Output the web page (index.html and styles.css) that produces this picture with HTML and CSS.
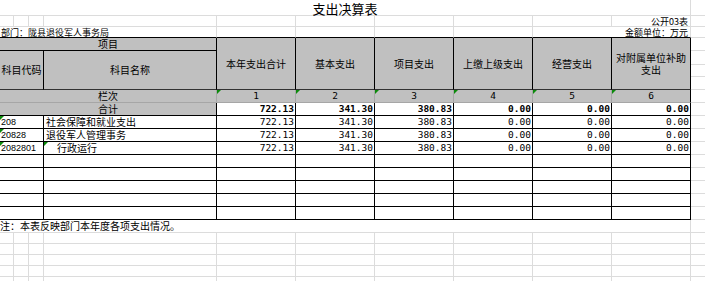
FILE: index.html
```html
<!DOCTYPE html>
<html lang="zh-CN">
<head>
<meta charset="utf-8">
<title>支出决算表</title>
<link rel="stylesheet" href="styles.css">
</head>
<body>
<div class="sheet">
  <!-- row: title -->
  <div class="s10 title">支出决算表</div><div></div>
  <!-- row: 公开03表 -->
  <div></div><div></div><div></div><div></div><div></div><div></div><div></div><div></div><div></div><div class="r small">公开03表</div><div></div>
  <!-- row: 部门 -->
  <div class="s4 tb small lbl">部门：陇县退役军人事务局</div><div class="tb"></div><div class="tb"></div><div class="tb"></div><div class="tb"></div><div class="s2 tb r small">金额单位：万元</div><div></div>
  <!-- header -->
  <div class="h s4">项目</div>
  <div class="h rs4 hb">本年支出合计</div>
  <div class="h rs4 hb">基本支出</div>
  <div class="h rs4 hb">项目支出</div>
  <div class="h rs4 hb">上缴上级支出</div>
  <div class="h rs4 hb">经营支出</div>
  <div class="h rs4 hb wrap">对附属单位补助支出</div>
  <div></div>
  <div class="h s3 rs3 hb">科目代码</div><div class="h rs3 hb">科目名称</div><div></div>
  <div></div>
  <div></div>
  <!-- 栏次 -->
  <div class="h2 s4">栏次</div>
  <div class="h2 n t">1</div><div class="h2 n t">2</div><div class="h2 n t">3</div><div class="h2 n t">4</div><div class="h2 n t">5</div><div class="h2 n t last">6</div>
  <div></div>
  <!-- 合计 -->
  <div class="h s4">合计</div>
  <div class="bk num b">722.13</div><div class="bk num b">341.30</div><div class="bk num b">380.83</div><div class="bk num b">0.00</div><div class="bk num b">0.00</div><div class="bk num b">0.00</div>
  <div></div>
  <!-- data -->
  <div class="bk s3 code t">208</div><div class="bk name">社会保障和就业支出</div>
  <div class="bk num">722.13</div><div class="bk num">341.30</div><div class="bk num">380.83</div><div class="bk num">0.00</div><div class="bk num">0.00</div><div class="bk num">0.00</div>
  <div></div>
  <div class="bk s3 code t">20828</div><div class="bk name">退役军人管理事务</div>
  <div class="bk num">722.13</div><div class="bk num">341.30</div><div class="bk num">380.83</div><div class="bk num">0.00</div><div class="bk num">0.00</div><div class="bk num">0.00</div>
  <div></div>
  <div class="bk s3 code t">2082801</div><div class="bk name ind t">行政运行</div>
  <div class="bk num">722.13</div><div class="bk num">341.30</div><div class="bk num">380.83</div><div class="bk num">0.00</div><div class="bk num">0.00</div><div class="bk num">0.00</div>
  <div></div>
  <!-- empty table rows -->
  <div class="bk s3"></div><div class="bk"></div><div class="bk"></div><div class="bk"></div><div class="bk"></div><div class="bk"></div><div class="bk"></div><div class="bk"></div><div></div>
  <div class="bk s3"></div><div class="bk"></div><div class="bk"></div><div class="bk"></div><div class="bk"></div><div class="bk"></div><div class="bk"></div><div class="bk"></div><div></div>
  <div class="bk s3"></div><div class="bk"></div><div class="bk"></div><div class="bk"></div><div class="bk"></div><div class="bk"></div><div class="bk"></div><div class="bk"></div><div></div>
  <div class="bk s3"></div><div class="bk"></div><div class="bk"></div><div class="bk"></div><div class="bk"></div><div class="bk"></div><div class="bk"></div><div class="bk"></div><div></div>
  <div class="bk s3"></div><div class="bk"></div><div class="bk"></div><div class="bk"></div><div class="bk"></div><div class="bk"></div><div class="bk"></div><div class="bk"></div><div></div>
  <!-- note -->
  <div class="s10 note">注：本表反映部门本年度各项支出情况。</div><div></div>
  <!-- empty sheet rows -->
  <div></div><div></div><div></div><div></div><div></div><div></div><div></div><div></div><div></div><div></div><div></div>
  <div></div><div></div><div></div><div></div><div></div><div></div><div></div><div></div><div></div><div></div>
  <div></div><div></div><div></div><div></div><div></div><div></div><div></div><div></div><div></div><div></div>
  <div></div><div></div><div></div><div></div><div></div><div></div><div></div><div></div><div></div><div></div>
  <div></div><div></div><div></div><div></div><div></div><div></div><div></div><div></div><div></div><div></div>
  <div></div><div></div><div></div><div></div><div></div><div></div><div></div><div></div><div></div><div></div>
</div>
</body>
</html>
```

FILE: styles.css
```css
html, body {
  margin: 0;
  padding: 0;
  background: #fff;
  overflow: hidden;
}

.sheet {
  display: grid;
  grid-template-columns: 14px 15px 15px 173px repeat(6, 79px) 15px;
  grid-template-rows: 16px 11px 11px 13px 14px 12px 13px 13px 13px repeat(8, 13px) 13px repeat(6, 11px);
  width: 706px;
  height: 281px;
  overflow: hidden;
  font-family: "Noto Sans CJK SC", sans-serif;
  font-size: 10px;
  color: #000;
}

.sheet > div {
  box-sizing: border-box;
  border-right: 1px solid #dcdcdc;
  border-bottom: 1px solid #dcdcdc;
  display: flex;
  align-items: center;
  white-space: nowrap;
  line-height: 1;
  min-width: 0;
  position: relative;
}

.s2 { grid-column: span 2; }
.s3 { grid-column: span 3; }
.s4 { grid-column: span 4; }
.s10 { grid-column: span 10; }
.rs3 { grid-row: span 3; }
.rs4 { grid-row: span 4; }

.title {
  justify-content: center;
  font-size: 13px;
  padding-top: 1px;
}

.small { font-size: 9px; }
.r { justify-content: flex-end; padding-right: 2px; }
.lbl { padding-left: 1px; }

.sheet > .tb { border-bottom-color: #000; }

.sheet > .h {
  background: #c0c0c0;
  justify-content: center;
  border-right-color: #000;
  border-bottom-color: #000;
}

.sheet > .hb { border-bottom-color: #333; }

.sheet > .wrap {
  white-space: normal;
  text-align: center;
  line-height: 12px;
  padding: 0 3px;
}

.sheet > .h2 {
  background: #c0c0c0;
  justify-content: center;
  border-right-color: #a6a6a6;
  border-bottom-color: #a6a6a6;
}

.sheet > .h2.last { border-right-color: #000; }

.n {
  font-family: "DejaVu Sans Mono", monospace;
  font-size: 9.5px;
}

.sheet > .bk {
  border-right-color: #000;
  border-bottom-color: #000;
}

.num {
  justify-content: flex-end;
  padding-right: 1px;
  font-family: "DejaVu Sans Mono", monospace;
  font-size: 9.5px;
}

.b { font-weight: bold; }

.code {
  font-family: "Liberation Sans", sans-serif;
  font-size: 9px;
  padding-left: 1px;
}

.name { padding-left: 2px; }
.ind { padding-left: 13px; }

.note { padding-left: 0; }

.t::before {
  content: "";
  position: absolute;
  left: 0;
  top: 0;
  border-top: 4px solid #0b8a0b;
  border-right: 4px solid transparent;
}
```
